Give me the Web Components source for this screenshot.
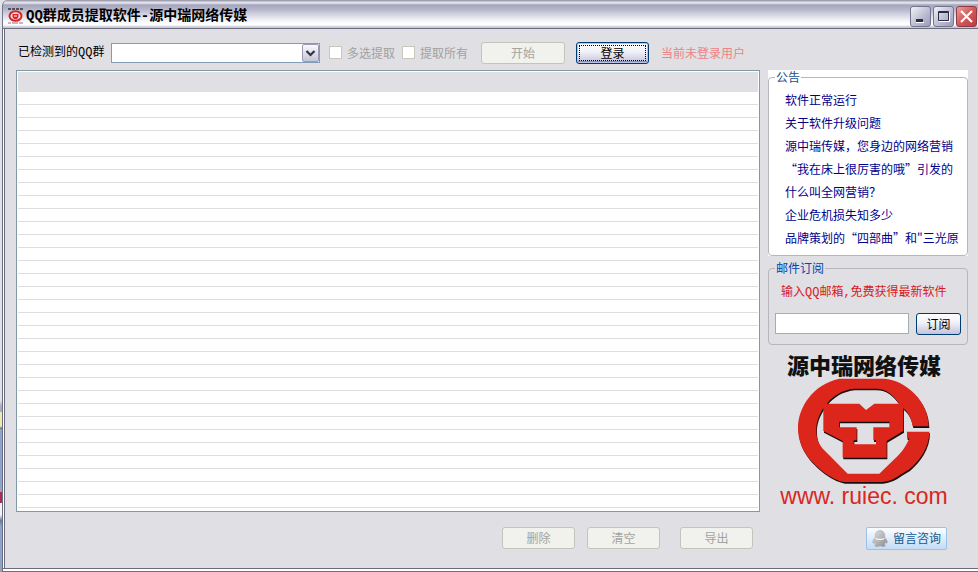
<!DOCTYPE html>
<html lang="zh-CN">
<head>
<meta charset="utf-8">
<meta name="viewport" content="width=device-width, initial-scale=1">
<title>QQ群成员提取软件-源中瑞网络传媒</title>
<style>
      body {
            margin: 0;
            --mixed: "Liberation Mono", "Noto Sans CJK SC", monospace;
            font: 12px/16px "Noto Sans CJK SC", sans-serif;
            color: #000;
            background: #e0dfe3;
      }
</style>
</head>
<body>
<app-window caption="QQ群成员提取软件-源中瑞网络传媒">
      <tool-bar slot="toolbar"></tool-bar>
      <member-list></member-list>
      <side-panel>
            <group-box caption="公告" class="notice">
                  <notice-list></notice-list>
            </group-box>
            <group-box caption="邮件订阅">
                  <mail-subscribe></mail-subscribe>
            </group-box>
            <brand-logo></brand-logo>
      </side-panel>
      <action-bar slot="footer"></action-bar>
</app-window>

<script>
class XpButton extends HTMLElement {
      constructor() {
            super();
            const root = this.attachShadow({ mode: "open" });
            root.innerHTML = `
                  <style>
                        :host {
                              display: inline-block;
                              width: 73px;
                              height: 22px;
                        }
                        button {
                              display: block;
                              box-sizing: border-box;
                              width: 100%;
                              height: 100%;
                              margin: 0;
                              padding: 0;
                              font: inherit;
                              color: #000;
                              border: 1px solid #003c74;
                              border-radius: 3px;
                              background: linear-gradient(#fff, #f0f0f8 45%, #c3c2dc);
                        }
                        button:disabled {
                              color: #a3a39f;
                              border-color: #c5c3bc;
                              background: #f1f1ed;
                        }
                        :host([focused]) button {
                              box-shadow: inset 0 0 0 1px #b3c3ea, inset 0 -2px 0 #7e92cf;
                              outline: 1px dotted #000;
                              outline-offset: -4px;
                        }
                  </style>
                  <button type="button"><slot></slot></button>
            `;
            root.querySelector("button").disabled = this.hasAttribute("disabled");
      }
}
customElements.define("xp-button", XpButton);

class AppWindow extends HTMLElement {
      constructor() {
            super();
            this.attachShadow({ mode: "open" }).innerHTML = `
                  <style>
                        /* the 2px strip on the left is the desktop behind the window */
                        :host {
                              display: flex;
                              flex-direction: column;
                              box-sizing: border-box;
                              min-height: 100vh;
                              padding-left: 2px;
                              background:
                                    linear-gradient(#e2e2ec 70%, #a9adbd 71% 72%, #eeeab0 72% 74.500%, #55586a 75%, #8ca6cc 75% 85%, #a8a0b4 86%, #b02c50 86% 88%, #f4f4f8 88% 90%, #6c7c98 91%, #8ca6cc 92% 98%, #a0a0b0) 0 0 / 2px 100% no-repeat,
                                    #e0dfe3;
                        }
                        header {
                              display: flex;
                              align-items: center;
                              gap: 2px;
                              box-sizing: border-box;
                              height: 28px;
                              padding: 4px 1px 0 4px;
                              border-top-left-radius: 6px;
                              border-left: 1px solid #77778c;
                              background: linear-gradient(#8c8ca0 0, #d8d8e2 2px, #e8e8f0 3px, #a4a4bd 5px, #b4b4ca 9px, #dcdce8 16px, #fafafd 22px, #fff 25px, #c8c8d4 27px);
                        }
                        h1 {
                              flex: 1;
                              margin: 0;
                              font: bold 14px/20px var(--mixed);
                        }
                        .controls {
                              display: flex;
                              gap: 2px;
                        }
                        .controls button {
                              display: grid;
                              place-items: center;
                              width: 21px;
                              height: 21px;
                              padding: 0;
                              border: 1px solid #73748f;
                              border-radius: 3px;
                              background: linear-gradient(135deg, #f2f2f8, #b9b9cf 60%, #9c9cba);
                        }
                        .controls .close {
                              border-color: #8d3a48;
                              background: linear-gradient(135deg, #e9a09c, #d25957 50%, #b83f43);
                        }
                        main {
                              flex: 1;
                              display: flex;
                              flex-direction: column;
                              padding-left: 2px;
                              border: 1px solid #6c6c80;
                              border-right: 0;
                              box-shadow: inset 1px 0 #fff, inset 2px 0 #6c6c80;
                        }
                        .body {
                              flex: 1;
                              display: grid;
                              grid-template-columns: 1fr 200px;
                              gap: 8px;
                              padding: 0 10px 0 11px;
                        }
                        .edge {
                              height: 3px;
                              box-sizing: border-box;
                              background: #fff;
                              border-left: 1px solid #6c6c80;
                              border-bottom: 1px solid #6c6c80;
                        }
                  </style>
                  <header>
                        <svg width="17" height="16" viewBox="0 0 17 16" aria-hidden="true">
                              <path d="M1 1h3M5 1h3M9 1h3M13 1h3" stroke="#333" stroke-width="1.500"/>
                              <ellipse cx="8.500" cy="8" rx="6" ry="4.800" fill="#f6dede" stroke="#d3272b" stroke-width="2"/>
                              <path d="M5.500 6h6v3l-1.500 2h-3l-1.500-2z" fill="#d3272b"/>
                              <path d="M7 8h3" stroke="#fff"/>
                              <path d="M1 15h3M5 15h6M12 15h4" stroke="#a86a6a"/>
                        </svg>
                        <h1>${this.getAttribute("caption")}</h1>
                        <div class="controls">
                              <button type="button" aria-label="最小化">
                                    <svg width="15" height="15"><path d="M3 10h7v3H3z" fill="#2c2c44"/><path d="M3 13h8v1H3z" fill="#fff"/></svg>
                              </button>
                              <button type="button" aria-label="最大化">
                                    <svg width="15" height="15"><path d="M2.500 2.500h10v9h-10zM2 3.500h11" fill="none" stroke="#2c2c44"/><path d="M3 12.500h10.500V3" fill="none" stroke="#fff"/></svg>
                              </button>
                              <button type="button" class="close" aria-label="关闭">
                                    <svg width="15" height="15"><path d="M2 2l11 11M13 2L2 13" stroke="#fff" stroke-width="2.200"/></svg>
                              </button>
                        </div>
                  </header>
                  <main>
                        <slot name="toolbar"></slot>
                        <div class="body"><slot></slot></div>
                        <slot name="footer"></slot>
                  </main>
                  <div class="edge"></div>
            `;
      }
}
customElements.define("app-window", AppWindow);

class ToolBar extends HTMLElement {
      constructor() {
            super();
            this.attachShadow({ mode: "open" }).innerHTML = `
                  <style>
                        :host {
                              display: flex;
                              align-items: center;
                              box-sizing: border-box;
                              height: 41px;
                              padding: 6px 13px 0;
                              white-space: nowrap;
                        }
                        .group {
                              width: 93px;
                              font-family: var(--mixed);
                        }
                        .combo {
                              display: grid;
                              width: 209px;
                              height: 20px;
                              margin-right: 9px;
                        }
                        .combo > * {
                              grid-area: 1 / 1;
                        }
                        select {
                              appearance: none;
                              box-sizing: border-box;
                              width: 100%;
                              height: 20px;
                              padding: 0 20px 0 4px;
                              font: inherit;
                              border: 1px solid #7f9db9;
                              border-radius: 0;
                              background: #fff;
                        }
                        .combo svg {
                              justify-self: end;
                              align-self: center;
                              margin-right: 1px;
                              pointer-events: none;
                        }
                        .check {
                              display: flex;
                              align-items: center;
                              gap: 5px;
                              margin-right: 7px;
                              color: #a1a1a1;
                        }
                        input {
                              appearance: none;
                              box-sizing: border-box;
                              width: 13px;
                              height: 13px;
                              margin: 0;
                              border: 1px solid #cac8bb;
                              background: #fff;
                        }
                        .start {
                              width: 84px;
                              margin: 0 11px 0 6px;
                        }
                        .state {
                              margin-left: 12px;
                              color: #ee8287;
                        }
                  </style>
                  <label class="group" for="group">已检测到的QQ群</label>
                  <div class="combo">
                        <select id="group"></select>
                        <svg width="17" height="18" viewBox="0 0 17 18" aria-hidden="true">
                              <defs><linearGradient id="face" x2="0" y2="1"><stop stop-color="#fbfbfe"/><stop offset="1" stop-color="#c3c3d8"/></linearGradient></defs>
                              <rect x=".5" y=".5" width="16" height="17" rx="1.500" fill="url(#face)" stroke="#9b9bb5"/>
                              <path d="M4.500 7l4 4 4-4" fill="none" stroke="#333348" stroke-width="2.200"/>
                        </svg>
                  </div>
                  <label class="check"><input type="checkbox" disabled>多选提取</label>
                  <label class="check"><input type="checkbox" disabled>提取所有</label>
                  <xp-button class="start" disabled>开始</xp-button>
                  <xp-button focused>登录</xp-button>
                  <span class="state">当前未登录用户</span>
            `;
      }
}
customElements.define("tool-bar", ToolBar);

class MemberList extends HTMLElement {
      constructor() {
            super();
            this.attachShadow({ mode: "open" }).innerHTML = `
                  <style>
                        :host {
                              display: flex;
                              flex-direction: column;
                              min-height: 400px;
                              padding: 1px;
                              border: 1px solid #8499a6;
                              background: #fff;
                        }
                        .head {
                              height: 20px;
                              background: #e0dfe3;
                        }
                        /* empty rows, ruled every 13px */
                        .rows {
                              flex: 1;
                              background: repeating-linear-gradient(#fff 0 12px, #dcdfe2 12px 13px);
                        }
                  </style>
                  <div class="head"></div>
                  <div class="rows"></div>
            `;
      }
}
customElements.define("member-list", MemberList);

class SidePanel extends HTMLElement {
      constructor() {
            super();
            this.attachShadow({ mode: "open" }).innerHTML = `
                  <style>
                        :host {
                              display: flex;
                              flex-direction: column;
                              gap: 5px;
                        }
                  </style>
                  <slot></slot>
            `;
      }
}
customElements.define("side-panel", SidePanel);

class GroupBox extends HTMLElement {
      constructor() {
            super();
            this.attachShadow({ mode: "open" }).innerHTML = `
                  <style>
                        :host {
                              display: block;
                        }
                        :host(.notice) {
                              background: #fff;
                        }
                        fieldset {
                              min-width: 0;
                              margin: 0;
                              padding: 0 6px 4px;
                              border: 1px solid #b7b6bc;
                              border-radius: 4px;
                        }
                        legend {
                              padding: 0 1px;
                              line-height: 14px;
                              color: #0046b0;
                        }
                        :host(.notice) legend {
                              color: #14508c;
                        }
                  </style>
                  <fieldset>
                        <legend>${this.getAttribute("caption")}</legend>
                        <slot></slot>
                  </fieldset>
            `;
      }
}
customElements.define("group-box", GroupBox);

class NoticeList extends HTMLElement {
      constructor() {
            super();
            this._list = [
                  "软件正常运行",
                  "关于软件升级问题",
                  "源中瑞传媒，您身边的网络营销",
                  "“我在床上很厉害的哦”引发的",
                  "什么叫全网营销？",
                  "企业危机损失知多少",
                  "品牌策划的“四部曲”和\"三光原",
            ];
            this.attachShadow({ mode: "open" });
            this.render();
      }
      render() {
            this.shadowRoot.innerHTML = `
                  <style>
                        :host {
                              display: block;
                              padding: 4px 0 2px 10px;
                        }
                        ul {
                              margin: 0;
                              padding: 0;
                              list-style: none;
                        }
                        li {
                              line-height: 23px;
                              white-space: nowrap;
                        }
                        a {
                              color: #00008b;
                              text-decoration: none;
                        }
                  </style>
                  <ul>${this._list.map(item => `<li><a href="#">${item}</a></li>`).join("")}</ul>
            `;
      }
}
customElements.define("notice-list", NoticeList);

class MailSubscribe extends HTMLElement {
      constructor() {
            super();
            this.attachShadow({ mode: "open" }).innerHTML = `
                  <style>
                        :host {
                              display: block;
                              padding: 10px 0 5px;
                        }
                        label {
                              display: block;
                              margin: 0 0 12px 6px;
                              font-family: var(--mixed);
                              white-space: nowrap;
                              color: #d7191c;
                        }
                        div {
                              display: flex;
                              gap: 7px;
                        }
                        input {
                              flex: 1;
                              min-width: 0;
                              box-sizing: border-box;
                              height: 21px;
                              padding: 0 4px;
                              font: inherit;
                              border: 1px solid #a5acb2;
                              background: #fff;
                        }
                        xp-button {
                              width: 45px;
                        }
                  </style>
                  <label for="mail">输入QQ邮箱,免费获得最新软件</label>
                  <div>
                        <input id="mail" type="text">
                        <xp-button>订阅</xp-button>
                  </div>
            `;
      }
}
customElements.define("mail-subscribe", MailSubscribe);

class BrandLogo extends HTMLElement {
      constructor() {
            super();
            this.attachShadow({ mode: "open" }).innerHTML = `
                  <style>
                        :host {
                              display: flex;
                              flex-direction: column;
                              align-items: center;
                              gap: 1px;
                              padding: 2px 8px 0 0;
                              white-space: nowrap;
                        }
                        strong {
                              font-size: 22px;
                              font-weight: 900;
                              line-height: 24px;
                              color: #111;
                        }
                        span {
                              font: 23px/20px "Liberation Sans", sans-serif;
                              color: #d8281f;
                        }
                  </style>
                  <strong>源中瑞网络传媒</strong>
                  <svg width="137" height="108" viewBox="80 98 411 324" aria-hidden="true">
                        <defs>
                              <path id="ring" d="M478 246H430C427 225 418 205 404 194L390 178C370 150 350 133 320 133H255C220 136 190 155 175 175L160 195C148 215 140 235 141 260C141 285 150 303 165 318L235 388H330L385 335C405 315 412 300 420 282H413V262H480C480 310 450 350 420 375L395 390Q370 410 340 413H225Q200 410 165 385C120 350 86 310 86 250C86 190 130 120 210 103H345C410 108 478 170 478 246Z"/>
                              <path id="mark" fill-rule="evenodd" d="M162 178H270L290 197L315 178H402V260L352 290V340H220V290L162 260ZM210 232V249H262V288H253V300H320V288H312V249H360V232Z"/>
                        </defs>
                        <g fill="#1a0d0d" transform="translate(2 5)"><use href="#ring"/><use href="#mark"/></g>
                        <g fill="#dc261c"><use href="#ring"/><use href="#mark"/></g>
                  </svg>
                  <span>www. ruiec. com</span>
            `;
      }
}
customElements.define("brand-logo", BrandLogo);

class ActionBar extends HTMLElement {
      constructor() {
            super();
            this.attachShadow({ mode: "open" }).innerHTML = `
                  <style>
                        :host {
                              display: flex;
                              align-items: center;
                              justify-content: flex-end;
                              box-sizing: border-box;
                              height: 56px;
                              padding: 0 31px 4px 0;
                        }
                        xp-button {
                              margin-right: 12px;
                        }
                        .export {
                              margin: 0 113px 0 8px;
                        }
                        .consult {
                              display: flex;
                              align-items: center;
                              gap: 5px;
                              box-sizing: border-box;
                              width: 81px;
                              height: 23px;
                              padding: 0 5px;
                              font: inherit;
                              white-space: nowrap;
                              color: #17578f;
                              border: 1px solid #9dc0e6;
                              border-radius: 2px;
                              background: linear-gradient(#fbfdff, #d9e9fb 60%, #c3dcf7);
                        }
                        svg {
                              flex: none;
                        }
                  </style>
                  <xp-button disabled>删除</xp-button>
                  <xp-button disabled>清空</xp-button>
                  <xp-button disabled class="export">导出</xp-button>
                  <button type="button" class="consult">
                        <svg width="16" height="17" viewBox="0 0 16 17" aria-hidden="true">
                              <defs><linearGradient id="grey" x2="1" y2="1"><stop stop-color="#e4e4e4"/><stop offset="1" stop-color="#8b8b8b"/></linearGradient></defs>
                              <path d="M8 .5C5 .5 3.300 2.700 3.300 5.500v1.800C1.500 9.300.500 11 .800 12.800c.200.800 1 .300 1.700-.600.200.900.600 1.500 1.200 2-.700.300-1 .700-1 1.200 0 1.300 4.300 1.300 5.300.300 1 1 5.300 1 5.300-.300 0-.500-.300-.900-1-1.200.600-.500 1-1.100 1.200-2 .700.900 1.500 1.400 1.700.600.300-1.800-.700-3.500-2.500-5.500V5.500C12.700 2.700 11 .500 8 .500z" fill="url(#grey)" stroke="#a0a0a0" stroke-width=".5"/>
                              <path d="M3.500 8.500c3 1.300 6 1.300 9 0" fill="none" stroke="#fff" stroke-width="1.200"/>
                        </svg>
                        留言咨询
                  </button>
            `;
      }
}
customElements.define("action-bar", ActionBar);
</script>
</body>
</html>
